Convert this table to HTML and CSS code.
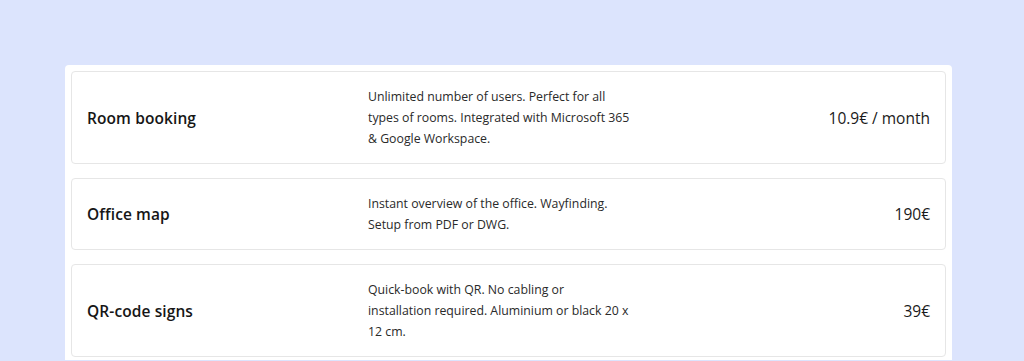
FILE: index.html
```html
<!DOCTYPE html>
<html lang="en">
<head>
<meta charset="utf-8">
<title>Pricing</title>
<link rel="stylesheet" href="styles.css">
</head>
<body>
<main class="panel">
  <div class="card">
    <h3 class="title">Room booking</h3>
    <p class="desc">Unlimited number of users. Perfect for all types of rooms. Integrated with Microsoft 365 &amp; Google Workspace.</p>
    <div class="price">10.9€ / month</div>
  </div>
  <div class="card">
    <h3 class="title">Office map</h3>
    <p class="desc">Instant overview of the office. Wayfinding. Setup from PDF or DWG.</p>
    <div class="price">190€</div>
  </div>
  <div class="card">
    <h3 class="title">QR-code signs</h3>
    <p class="desc">Quick-book with QR. No cabling or<br>installation required. Aluminium or black 20 x 12 cm.</p>
    <div class="price">39€</div>
  </div>
</main>
</body>
</html>
```

FILE: styles.css
```css
html, body {
  margin: 0;
  padding: 0;
  background: #dce4fd;
  height: 361px;
  overflow: hidden;
}
body {
  font-family: "Open Sans", "Liberation Sans", sans-serif;
  color: #1c1c1c;
  padding-top: 65px;
  padding-left: 65px;
  box-sizing: border-box;
}
.panel {
  width: 887px;
  background: #fff;
  border-radius: 4px 4px 0 0;
  padding: 6px 6px 3px;
  box-sizing: border-box;
  display: flex;
  flex-direction: column;
  gap: 14px;
}
.card {
  border: 1px solid #e6e6e6;
  border-radius: 4px;
  padding: 14px 15px;
  display: grid;
  grid-template-columns: 1fr 1fr 1fr;
  align-items: center;
  min-height: 42px;
}
.title {
  margin: 0;
  font-size: 15.5px;
  font-weight: 600;
  color: #161616;
  letter-spacing: 0.1px;
}
.desc {
  margin: 0;
  font-size: 12.3px;
  line-height: 21px;
  color: #2a2a2a;
  max-width: 262px;
}
.price {
  text-align: right;
  font-size: 15.5px;
  color: #1a1a1a;
}
```
